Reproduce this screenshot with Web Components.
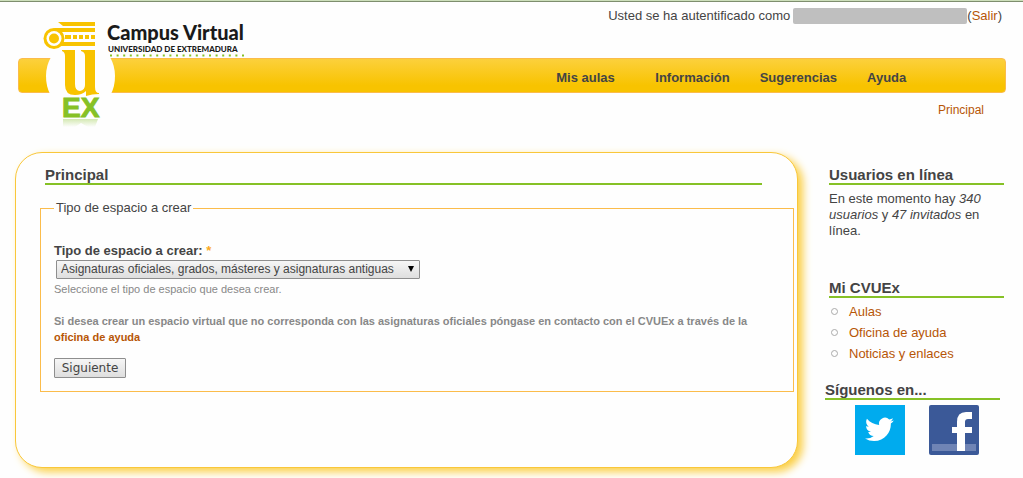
<!DOCTYPE html>
<html lang="es">
<head>
<meta charset="utf-8">
<meta name="viewport" content="width=device-width, initial-scale=1">
<title>Campus Virtual - Universidad de Extremadura</title>
<style>
  :root {
    --ink: #444;
    --link: #b75607;
    --green: #86c126;
    --amber: #f9c73a;
    --muted: #888;
  }
  body {
    margin: 0;
    background: #fefefe;
    color: var(--ink);
    font: 13px/16px "Liberation Sans", Arial, sans-serif;
  }
</style>
</head>
<body>
<cv-page>
  <cv-header slot="header">
    <cv-logo slot="logo"></cv-logo>
    <cv-session slot="session"></cv-session>
    <cv-nav slot="nav"></cv-nav>
  </cv-header>
  <cv-card slot="main">
    <cv-heading class="title">Principal</cv-heading>
    <cv-space-form></cv-space-form>
  </cv-card>
  <cv-sidebar slot="side"></cv-sidebar>
</cv-page>

<script>
const define = (name, html) => {
  const template = document.createElement('template');
  template.innerHTML = html;
  customElements.define(name, class extends HTMLElement {
    constructor() {
      super();
      this.attachShadow({ mode: 'open' }).append(template.content.cloneNode(true));
    }
  });
};

define('cv-page', `
  <style>
    :host { display: block; border-top: 1px solid #cddfbb; }
    .line { border-top: 1px solid #7e8e6e; }
    .columns { display: flex; align-items: flex-start; gap: 27px; padding: 0 19px 10px 15px; }
    main { flex: 1; min-width: 0; }
    aside { flex: 0 0 179px; }
  </style>
  <div class="line"></div>
  <slot name="header"></slot>
  <div class="columns">
    <main><slot name="main"></slot></main>
    <aside><slot name="side"></slot></aside>
  </div>`);

define('cv-header', `
  <style>
    :host { display: block; position: relative; height: 150px; }
    header { padding: 6px 17px 0 18px; }
    .session { display: flex; justify-content: flex-end; height: 50px; padding-right: 4px; }
    .crumb { display: flex; justify-content: flex-end; padding: 9px 22px 0 0; font-size: 12px; }
    .logo { position: absolute; left: 43px; top: 18px; }
    a { color: var(--link); text-decoration: none; }
  </style>
  <header>
    <div class="session"><slot name="session"></slot></div>
    <slot name="nav"></slot>
    <div class="crumb"><a href="#">Principal</a></div>
    <div class="logo"><slot name="logo"></slot></div>
  </header>`);

define('cv-session', `
  <style>
    :host { display: flex; align-items: center; height: 16px; }
    .name { width: 174px; height: 16px; margin-left: 3px; border-radius: 2px; background: #bfbfbf; }
    a { color: var(--link); text-decoration: none; }
  </style>
  <span>Usted se ha autentificado como</span><span class="name"></span><span>(<a href="#">Salir</a>)</span>`);

define('cv-nav', `
  <style>
    :host { display: block; }
    nav {
      display: flex; justify-content: flex-end; align-items: center; gap: 30px;
      box-sizing: border-box; height: 35px; padding: 4px 69px 0 0;
      border: 1px solid #fbbc4b; border-radius: 4px;
      background: linear-gradient(#fcd03c, #f8c300 80%);
    }
    a { min-width: 69px; color: var(--ink); font-weight: bold; text-decoration: none; }
  </style>
  <nav>
    <a href="#">Mis aulas</a><a href="#">Información</a><a href="#">Sugerencias</a><a href="#">Ayuda</a>
  </nav>`);

define('cv-logo', `
  <style>
    :host { display: block; }
    .row { display: flex; align-items: flex-start; }
    .mark { display: block; overflow: visible; }
    .words { padding: 1px 0 0 4px; color: #1a1a1a; font-family: Lato, sans-serif; font-weight: 900; }
    .name { font-size: 20px; line-height: 23px; white-space: nowrap; }
    .sub { padding-left: 1px; font-size: 8px; line-height: 10px; white-space: nowrap; }
    .dots { display: block; }
  </style>
  <div class="row">
    <svg class="mark" width="60" height="108" viewBox="0 0 60 108" role="img" aria-label="Uex">
      <defs>
        <linearGradient id="fade" x1="0" y1="0" x2="0" y2="1">
          <stop offset="0" stop-color="#86c126" stop-opacity=".35"/>
          <stop offset="1" stop-color="#86c126" stop-opacity="0"/>
        </linearGradient>
      </defs>
      <path d="M8 37H67Q72 46 72 56T68 74H7Q3 66 3 56T8 37Z" fill="#fefefe"/>
      <g fill="#f8c300">
        <path d="M15 2H52V6H20Z"/>
        <path d="M11 8H52V12H18L16 14ZM18 22H52V26H15Z"/>
        <circle cx="11" cy="18.500" r="10.500"/>
        <circle cx="11" cy="18.500" r="7.500" fill="#fefefe"/>
        <circle cx="11" cy="18.500" r="5"/>
        <path d="M22 15H28V19H22ZM30 15H34V19H30ZM36 15H40V19H36ZM42 15H46V19H42ZM48 15H52V19H48Z"/>
        <path d="M19 30H32V64Q32 71 37 71Q42 70 42 65V36Q42 32 38 31V30H52V67Q52 73 56 73V74Q49 74 43 76V71Q39 75 32 75Q22 75 22 65V36Q22 32 19 31Z"/>
      </g>
      <text x="19" y="97" font-family="Liberation Sans, Arial, sans-serif" font-weight="bold" font-size="28" fill="#86c126" stroke="#86c126" stroke-width="1">EX</text>
      <path d="M20 99H55L52 107H45L38 103L32 107H20Z" fill="url(#fade)"/>
    </svg>
    <div class="words">
      <div class="name">Campus Virtual</div>
      <div class="sub">UNIVERSIDAD DE EXTREMADURA</div>
      <svg class="dots" width="138" height="3" aria-hidden="true">
        <path d="M3 1.500H137" stroke="#86c126" stroke-width="2" stroke-dasharray="2 4.600"/>
      </svg>
    </div>
  </div>`);

define('cv-heading', `
  <style>
    :host { display: block; }
    h2 { margin: 0; border-bottom: 2px solid var(--green); font-size: 15px; line-height: 17px; }
  </style>
  <h2><slot></slot></h2>`);

define('cv-card', `
  <style>
    :host {
      display: block; box-sizing: border-box; min-height: 316px; padding: 13px 3px 24px 24px;
      border: 1px solid var(--amber); border-radius: 27px; background: #fefefe;
      box-shadow: 5px 4px 8px #fbcf45;
    }
    ::slotted(.title) { margin: 0 32px 15px 5px; }
  </style>
  <slot></slot>`);

define('cv-space-form', `
  <style>
    :host { display: block; }
    form { margin: 0; }
    fieldset { margin: 0; padding: 27px 13px 13px; border: 1px solid #fbbc4b; min-width: 0; }
    legend { padding: 0 2px; }
    label { display: block; font-weight: bold; }
    label span { color: #fba91c; }
    .pick { display: grid; width: 364px; margin: 1px 2px 3px; }
    select {
      grid-area: 1 / 1; appearance: none; height: 19px; margin: 0; padding: 0 18px 0 4px;
      border: 1px solid #8e8e8e; border-radius: 1px; color: var(--ink);
      background: linear-gradient(#f6f6f6, #dedede); font: 12px/17px "Liberation Sans", Arial, sans-serif;
    }
    .arrow { grid-area: 1 / 1; place-self: center end; margin-right: 6px; pointer-events: none; }
    .hint { margin: 0 0 17px; color: var(--muted); font-size: 11px; line-height: 14px; }
    .note { margin: 0 0 13px; color: var(--muted); font-weight: bold; font-size: 11px; }
    .note a { color: var(--link); text-decoration: none; }
    button {
      display: block; width: 72px; height: 20px; padding: 0; border: 1px solid #8e8e8e; border-radius: 1px;
      background: linear-gradient(#f6f6f6, #dedede); color: var(--ink); font: 12px/18px "DejaVu Sans", sans-serif;
    }
  </style>
  <form>
    <fieldset>
      <legend>Tipo de espacio a crear</legend>
      <label for="kind">Tipo de espacio a crear: <span>*</span></label>
      <div class="pick">
        <select id="kind" aria-describedby="hint"><option>Asignaturas oficiales, grados, másteres y asignaturas antiguas</option></select>
        <svg class="arrow" width="6" height="8" aria-hidden="true"><path d="M0 0H6L3 6Z" fill="#000"/></svg>
      </div>
      <p class="hint" id="hint">Seleccione el tipo de espacio que desea crear.</p>
      <p class="note">Si desea crear un espacio virtual que no corresponda con las asignaturas oficiales póngase en contacto con el CVUEx a través de la <a href="#">oficina de ayuda</a></p>
      <button type="button">Siguiente</button>
    </fieldset>
  </form>`);

define('cv-sidebar', `
  <style>
    :host { display: flex; flex-direction: column; padding-top: 14px; }
    .block { padding-left: 4px; }
    .online { margin: 6px 0 40px; }
    ul { margin: 3px 0 17px; padding: 0; list-style: none; line-height: 21px; }
    li { display: flex; align-items: center; gap: 11px; }
    li::before { content: ""; width: 5px; height: 5px; margin-left: 2px; border: 1px solid #aaa; border-radius: 50%; }
    a { color: var(--link); text-decoration: none; }
    .social { padding-right: 4px; }
    .icons { display: flex; gap: 24px; padding: 5px 0 0 30px; }
    .icons a, .icons svg { display: block; }
  </style>
  <section class="block">
    <cv-heading>Usuarios en línea</cv-heading>
    <p class="online">En este momento hay <em>340</em> <em>usuarios</em> y <em>47 invitados</em> <span>en</span> <span>línea.</span></p>
  </section>
  <section class="block">
    <cv-heading>Mi CVUEx</cv-heading>
    <ul>
      <li><a href="#">Aulas</a></li>
      <li><a href="#">Oficina de ayuda</a></li>
      <li><a href="#">Noticias y enlaces</a></li>
    </ul>
  </section>
  <section class="social">
    <cv-heading>Síguenos en...</cv-heading>
    <div class="icons">
      <a href="#" aria-label="Twitter">
        <svg width="50" height="50" viewBox="0 0 50 50">
          <path d="M0 0H50V50H0Z" fill="#00abee"/>
          <g transform="translate(10 10) scale(1.200)">
            <path fill="#fff" d="M23.950 4.570a10 10 0 0 1-2.820.770 4.960 4.960 0 0 0 2.160-2.720c-.950.550-2 .950-3.130 1.180a4.920 4.920 0 0 0-8.380 4.480C7.690 8.090 4.070 6.130 1.640 3.160a4.820 4.820 0 0 0-.670 2.480c0 1.710.870 3.210 2.190 4.100a4.900 4.900 0 0 1-2.230-.620v.060a4.920 4.920 0 0 0 3.950 4.830 5 5 0 0 1-2.210.080 4.940 4.940 0 0 0 4.600 3.420A9.870 9.870 0 0 1 0 19.540a14 14 0 0 0 7.550 2.210c9.050 0 14-7.500 14-13.980 0-.210 0-.420-.020-.630a9.900 9.900 0 0 0 2.460-2.550z"/>
          </g>
        </svg>
      </a>
      <a href="#" aria-label="Facebook">
        <svg width="50" height="50" viewBox="0 0 50 50">
          <rect width="50" height="50" rx="2" fill="#3b5998"/>
          <path d="M3 39H47V46H3Z" fill="#6f84b5"/>
          <path fill="#fff" d="M28 46V28H23V22H28V17Q28 7 37 7H43V14H39Q36 14 36 17V22H43V28H36V46Z"/>
        </svg>
      </a>
    </div>
  </section>`);
</script>
</body>
</html>
